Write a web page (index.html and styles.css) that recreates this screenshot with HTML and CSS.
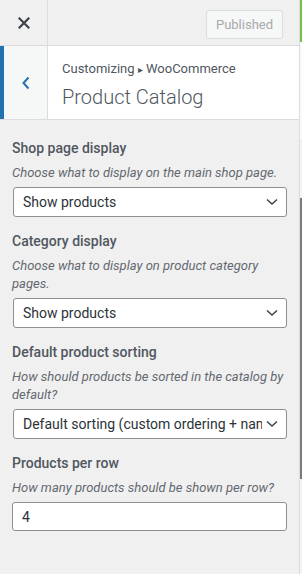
FILE: index.html
```html
<!DOCTYPE html>
<html lang="en">
<head>
  <meta charset="UTF-8" />
  <meta name="viewport" content="width=device-width, initial-scale=1.0"/>
  <title>Product Catalog</title>
  <link rel="stylesheet" href="styles.css">
</head>
<body>
<div class="layout">
  <div class="panel">

    <div class="topbar">
      <div class="close">
        <svg width="12" height="12" viewBox="0 0 12 12"><path d="M1.5 1.5 L10.5 10.5 M10.5 1.5 L1.5 10.5" stroke="#3c434a" stroke-width="2.2" stroke-linecap="square"/></svg>
      </div>
      <button class="publish" disabled>Published</button>
    </div>

    <div class="sechead">
      <div class="back">
        <svg width="10" height="14" viewBox="0 0 10 14"><path d="M7.5 1.5 L2.5 7 L7.5 12.5" fill="none" stroke="#2271b1" stroke-width="2"/></svg>
      </div>
      <div class="titles">
        <div class="crumb">Customizing <span class="sep">&#9656;</span> WooCommerce</div>
        <div class="title">Product Catalog</div>
      </div>
    </div>

    <div class="controls">
      <div class="control">
        <span class="label">Shop page display</span>
        <span class="desc">Choose what to display on the main shop page.</span>
        <div class="select"><span>Show products</span>
          <svg width="12" height="8" viewBox="0 0 12 8"><path d="M1 1.5 L6 6 L11 1.5" fill="none" stroke="#3c434a" stroke-width="1.5"/></svg>
        </div>
      </div>

      <div class="control">
        <span class="label">Category display</span>
        <span class="desc">Choose what to display on product category pages.</span>
        <div class="select"><span>Show products</span>
          <svg width="12" height="8" viewBox="0 0 12 8"><path d="M1 1.5 L6 6 L11 1.5" fill="none" stroke="#3c434a" stroke-width="1.5"/></svg>
        </div>
      </div>

      <div class="control">
        <span class="label">Default product sorting</span>
        <span class="desc">How should products be sorted in the catalog by default?</span>
        <div class="select"><span>Default sorting (custom ordering + name)</span>
          <svg width="12" height="8" viewBox="0 0 12 8"><path d="M1 1.5 L6 6 L11 1.5" fill="none" stroke="#3c434a" stroke-width="1.5"/></svg>
        </div>
      </div>

      <div class="control">
        <span class="label">Products per row</span>
        <span class="desc">How many products should be shown per row?</span>
        <input class="field" value="4" />
      </div>
    </div>

  </div>

  <div class="edge">
    <div class="live"></div>
    <div class="blank"></div>
    <div class="gap"></div>
    <div class="scroll"></div>
    <div class="rest"></div>
  </div>
</div>
</body>
</html>
```

FILE: styles.css
```css
body {
  margin: 0;
  background: #f0f0f1;
  font-family: Roboto, "Liberation Sans", sans-serif;
  color: #50575e;
}

.layout {
  display: flex;
  min-height: 574px;
}

.panel {
  width: 299px;
  border-right: 1px solid #dcdcde;
  background: #f0f0f1;
}

/* preview strip on the right */
.edge {
  width: 2px;
  display: flex;
  flex-direction: column;
}

.edge .live {
  height: 42px;
  background: #7ac142;
}

.edge .blank {
  height: 98px;
  background: #fafafa;
  border-bottom: 1px solid #e4e4e4;
}

.edge .gap {
  height: 57px;
  background: #f4f4f4;
}

.edge .scroll {
  height: 281px;
  background: #7d7b78;
}

.edge .rest {
  flex: 1;
  background: #f4f4f4;
}

.topbar {
  display: flex;
  height: 45px;
  border-bottom: 1px solid #dcdcde;
}

.close {
  width: 47px;
  border-right: 1px solid #dcdcde;
  display: flex;
  align-items: center;
  justify-content: center;
}

.publish {
  margin: 10px 16px 0 auto;
  height: 29px;
  width: 77px;
  background: #f6f7f7;
  border: 1px solid #dcdcde;
  border-radius: 3px;
  color: #a7aaad;
  font-family: inherit;
  font-size: 13px;
  padding: 0;
}

.sechead {
  display: flex;
  height: 73px;
  background: #fff;
  border-bottom: 1px solid #dcdcde;
}

.back {
  width: 43px;
  border-left: 4px solid #2271b1;
  border-right: 1px solid #dcdcde;
  background: #f6f7f7;
  display: flex;
  align-items: center;
  justify-content: center;
}

.titles {
  padding: 13px 0 0 14px;
}

.crumb {
  font-size: 13px;
  line-height: 20px;
  color: #50575e;
}

.crumb .sep {
  font-size: 10px;
}

.title {
  font-size: 20px;
  font-weight: 300;
  line-height: 30px;
  color: #50575e;
  margin-top: 2px;
}

.controls {
  padding: 16px 12px;
}

.control {
  margin-bottom: 12px;
}

.label {
  display: block;
  font-size: 14px;
  font-weight: 500;
  line-height: 24px;
  margin-bottom: 4px;
  color: #50575e;
}

.desc {
  display: block;
  font-size: 13px;
  font-style: italic;
  line-height: 18px;
  margin-bottom: 5px;
  color: #646970;
}

.select {
  display: flex;
  align-items: center;
  height: 28px;
  margin-left: 1px;
  padding: 0 8px 0 9px;
  background: #fff;
  border: 1px solid #8c8f94;
  border-radius: 3px;
  font-size: 14px;
  color: #2c3338;
}

.select span {
  flex: 1;
  overflow: hidden;
  white-space: nowrap;
}

.select svg {
  margin-left: 4px;
}

.field {
  box-sizing: border-box;
  width: 275px;
  height: 29px;
  padding: 0 9px;
  background: #fff;
  border: 1px solid #8c8f94;
  border-radius: 3px;
  font-family: inherit;
  font-size: 14px;
  color: #2c3338;
}
```
